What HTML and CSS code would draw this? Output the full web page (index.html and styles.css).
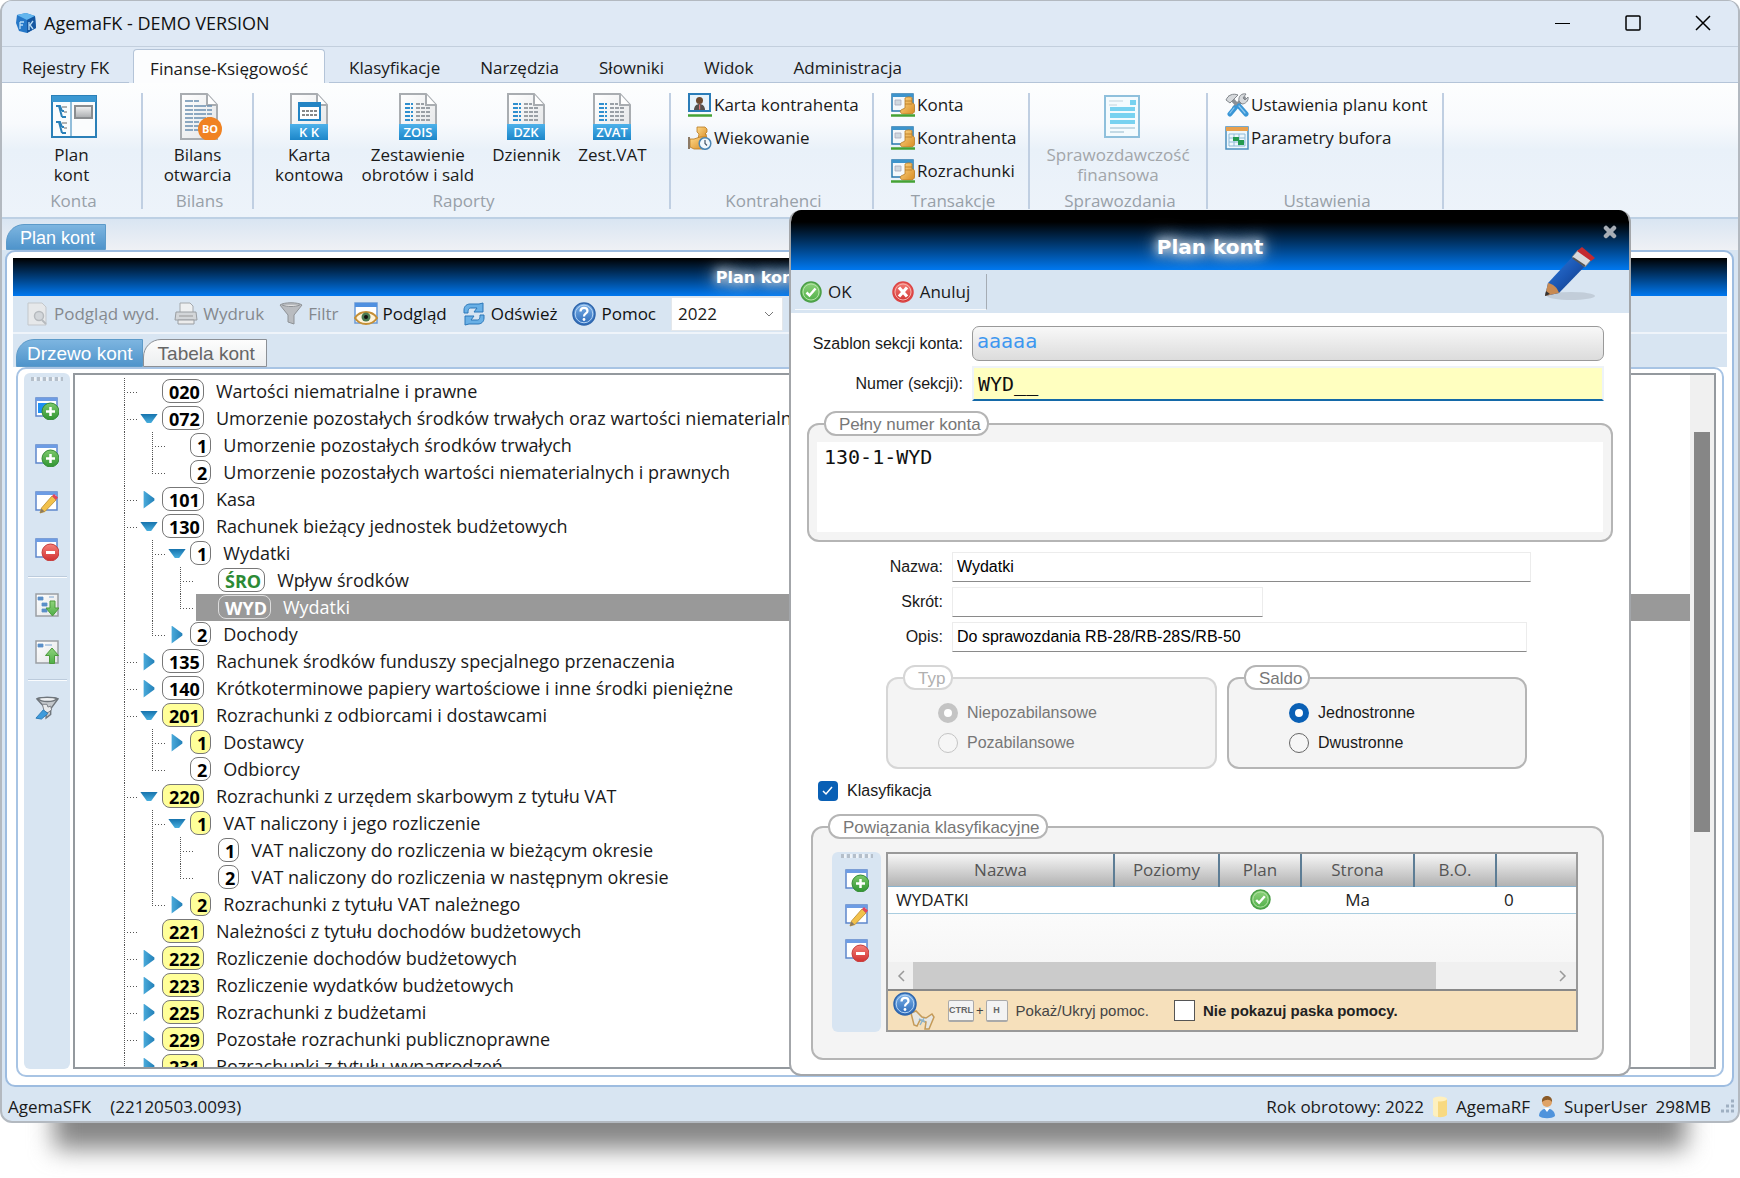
FILE: index.html
```html
<!DOCTYPE html>
<html lang="pl">
<head>
<meta charset="utf-8">
<title>AgemaFK - DEMO VERSION</title>
<link rel="stylesheet" href="styles.css">
</head>
<body>
<svg class="defs" aria-hidden="true">
  <defs>
    <linearGradient id="gBlue" x1="0" y1="0" x2="0" y2="1"><stop offset="0" stop-color="#4db1ea"/><stop offset="1" stop-color="#1c86c9"/></linearGradient>
    <linearGradient id="gGreen" x1="0" y1="0" x2="0" y2="1"><stop offset="0" stop-color="#7cc96a"/><stop offset="1" stop-color="#2f9432"/></linearGradient>
    <linearGradient id="gLime" x1="0" y1="0" x2="0" y2="1"><stop offset="0" stop-color="#8fd47c"/><stop offset="1" stop-color="#4fae48"/></linearGradient>
    <linearGradient id="gRed" x1="0" y1="0" x2="0" y2="1"><stop offset="0" stop-color="#f58078"/><stop offset="1" stop-color="#d03030"/></linearGradient>
    <linearGradient id="gPage" x1="0" y1="0" x2="1" y2="1"><stop offset="0" stop-color="#fff"/><stop offset="1" stop-color="#e2e4e6"/></linearGradient>
    <linearGradient id="gPanel" x1="0" y1="0" x2="0" y2="1"><stop offset="0" stop-color="#f4f4f4"/><stop offset="1" stop-color="#a8abae"/></linearGradient>
    <linearGradient id="gGold" x1="0" y1="0" x2="1" y2="1"><stop offset="0" stop-color="#ffd98a"/><stop offset="1" stop-color="#d98d24"/></linearGradient>
    <linearGradient id="gHelp" x1="0" y1="0" x2="0" y2="1"><stop offset="0" stop-color="#7fb4ea"/><stop offset="1" stop-color="#2a68b8"/></linearGradient>
    <linearGradient id="gPen" x1="0" y1="0" x2="1" y2="1"><stop offset="0" stop-color="#2f7fe0"/><stop offset=".5" stop-color="#1b57b4"/><stop offset="1" stop-color="#0d2f6c"/></linearGradient>
    <symbol id="doc" viewBox="0 0 38 47">
      <path d="M1 1h26l10 11v34H1z" fill="url(#gPage)" stroke="#a9adb1" stroke-width="2"/>
      <path d="M27 1v11h10" fill="#fff" stroke="#a9adb1" stroke-width="2"/>
    </symbol>
    <symbol id="docrows" viewBox="0 0 38 47">
      <use href="#doc"/>
      <path d="M6 11h8M6 15h8M6 19h8M6 23h8M6 27h8" stroke="#2f8fcf" stroke-width="2" stroke-dasharray="5 1 2"/>
      <path d="M17 11h8M17 15h15M17 19h15M17 23h15M17 27h15" stroke="#9aa0a6" stroke-width="2" stroke-dasharray="4 1"/>
      <path d="M0 31h38v16H0z" fill="url(#gBlue)"/>
    </symbol>
    <symbol id="win" viewBox="0 0 24 24">
      <path d="M1 2h21v18H1z" fill="#fff" stroke="#5d87cc" stroke-width="1.5"/>
      <path d="M1 2h21v3H1z" fill="#6d9ce4"/>
    </symbol>
    <symbol id="plus" viewBox="0 0 24 24">
      <circle cx="15.500" cy="15.500" r="8.500" fill="url(#gGreen)" stroke="#338a35"/>
      <path d="M15.500 11v9M11 15.500h9" stroke="#fff" stroke-width="2.500"/>
    </symbol>
    <symbol id="i-addf" viewBox="0 0 24 24"><use href="#win"/><path d="M3 7h13v10H3z" fill="#1e90f5"/><use href="#plus"/></symbol>
    <symbol id="i-add" viewBox="0 0 24 24"><use href="#win"/><use href="#plus"/></symbol>
    <symbol id="i-edit" viewBox="0 0 24 24">
      <use href="#win"/>
      <path d="M5 23l1.500-5L17 6l4 4L10 21.500z" fill="#f2c14b" stroke="#b98a2b" stroke-width=".8"/>
      <path d="M17 6l2-2 4 3.500-2 2.500z" fill="#e4455c"/><path d="M5 23l1.500-4.500 3 3z" fill="#8a7a62"/>
    </symbol>
    <symbol id="i-del" viewBox="0 0 24 24">
      <use href="#win"/><circle cx="15.500" cy="15.500" r="8.500" fill="url(#gRed)" stroke="#c43c3c"/>
      <path d="M11 15.500h9" stroke="#fff" stroke-width="3"/>
    </symbol>
    <symbol id="i-down" viewBox="0 0 24 24">
      <path d="M1 1h22v22H1z" fill="url(#gPage)" stroke="#9a9fa4" stroke-width="1.500"/>
      <path d="M3 4h5v3H3zM7 10h5v3H7zM7 16h5v3H7zM14 4h5" fill="#5a8fc8" stroke="#5a8fc8" stroke-width=".8"/>
      <path d="M15 8h5v7h4l-6.500 8-6.500-8h4z" fill="url(#gLime)" stroke="#4d9b3c"/>
    </symbol>
    <symbol id="i-up" viewBox="0 0 24 24">
      <path d="M1 1h22v22H1z" fill="url(#gPage)" stroke="#9a9fa4" stroke-width="1.500"/>
      <path d="M3 4h5v3H3zM10 5h7" fill="#5a8fc8" stroke="#5a8fc8" stroke-width=".8"/>
      <path d="M14.500 23.500h5v-8h4L17 8l-6.500 7.500h4z" fill="url(#gLime)" stroke="#4d9b3c"/>
    </symbol>
    <symbol id="i-funnelfix" viewBox="0 0 26 26">
      <path d="M2 3c3-2 19-2 23 0l-8 11v6l-5 4v-10z" fill="#c4c8cc" stroke="#6f757b" stroke-width="1.500"/>
      <path d="M3 3c4 4 17 4 21 0-5-2-17-2-21 0z" fill="#eef0f2" stroke="#6f757b" stroke-width="1.500"/>
      <path d="M8 9h5l1 3 3-1 1 4-4 3-4-1z" fill="#e8eaec" stroke="#777c82"/><path d="M9 15l5 4-7 6-6-1z" fill="#3d9bdc" stroke="#2a78b4"/>
    </symbol>
    <symbol id="i-ok" viewBox="0 0 22 22">
      <circle cx="11" cy="11" r="10" fill="url(#gLime)" stroke="#4a9e46" stroke-width="1.500"/>
      <circle cx="11" cy="11" r="8" fill="none" stroke="#b4e2a8"/>
      <path d="M6.500 11.500l3 3 6-7" fill="none" stroke="#fff" stroke-width="2.500"/>
    </symbol>
    <symbol id="i-no" viewBox="0 0 22 22">
      <circle cx="11" cy="11" r="10" fill="url(#gRed)" stroke="#d44" stroke-width="1.500"/>
      <circle cx="11" cy="11" r="8" fill="none" stroke="#f7b0aa"/>
      <path d="M7 6.500l8 9M15 6.500l-8 9" fill="none" stroke="#fff" stroke-width="3.200"/>
    </symbol>
    <symbol id="i-trans" viewBox="0 0 24 24">
      <path d="M1 1h21v17H1z" fill="#f4f8fb" stroke="#2878ae" stroke-width="1.500"/><path d="M1 1h21v3H1z" fill="#3d94cc"/>
      <path d="M4 7h6v5H4z" fill="#cfd8df" stroke="#aab" stroke-width=".8"/>
      <path d="M14 5c2-1.500 6-1.500 7 0v5c2 0 2.500 1 2.500 3v5c0 2-2 3-4 3h-7c-3 0-4-3-2.500-4l4-2z" fill="url(#gGold)" stroke="#b77a22" stroke-width=".8"/>
      <path d="M14 8h7M14 11h7" stroke="#b77a22" stroke-width=".8"/>
      <path d="M0 22.500h24" stroke="#45a234" stroke-width="2.600"/>
    </symbol>
    <symbol id="i-person" viewBox="0 0 24 24">
      <path d="M1 1h21v17H1z" fill="#e6f2fa" stroke="#2a7cb8" stroke-width="2"/>
      <circle cx="11.500" cy="7.500" r="3.500" fill="#6d4a30"/><path d="M6 17c0-8 11-8 11 0z" fill="#55504c"/><path d="M11 11.500h1.200v5H11z" fill="#d77"/>
      <path d="M0 22.500h24" stroke="#45a234" stroke-width="2.600"/>
    </symbol>
    <symbol id="i-aging" viewBox="0 0 24 24">
      <path d="M9 1h8l2 2v3l-2 2h1l1 5h-9l1-5-2-2V3z" fill="url(#gGold)" stroke="#b77a22" stroke-width=".8"/>
      <path d="M2 13h4l6-2h6v8l-3 4H6l-4-2z" fill="url(#gGold)" stroke="#b77a22" stroke-width=".8"/>
      <path d="M1 11v12" stroke="#8c7a66" stroke-width="2"/><circle cx="17" cy="17.500" r="5.800" fill="#f2f8fc" stroke="#4b86b4" stroke-width="1.500"/><path d="M17 14v3.500l2 2" fill="none" stroke="#456" stroke-width="1.200"/>
    </symbol>
    <symbol id="i-tools" viewBox="0 0 24 24">
      <path d="M5 4l9 10M19 5L9 15" stroke="#8b9096" stroke-width="4" stroke-linecap="round"/>
      <path d="M1 7c2-5 7-7 12-5l-3 3-5 5zM14 8c-1-5 3-8 7-7l-3 4 2 2 3-3c1 4-3 7-6 7z" fill="#d6d9dc" stroke="#83888d"/>
      <path d="M14 13l7 8M10 15l-5 6" stroke="#3a96d6" stroke-width="5" stroke-linecap="round"/>
      <path d="M14 13l6 7M9 15l-4 5" stroke="#8cc8f0" stroke-width="1.200" stroke-linecap="round"/>
    </symbol>
    <symbol id="i-buf" viewBox="0 0 24 24">
      <path d="M1 1h22v22H1z" fill="#eef7fc" stroke="#4b8fbe" stroke-width="1.500"/><path d="M1 1h22v4H1z" fill="#e9a04d"/>
      <path d="M4 8h16M4 12h16M4 16h16M4 20h16M4 8v12M9 8v12M14 8v12M20 8v12" stroke="#8ebbd8" fill="none"/><path d="M8 11h6v3h5v5h-6v-4H8z" fill="#249a50"/>
    </symbol>
    <symbol id="i-help" viewBox="0 0 24 24">
      <circle cx="12" cy="12" r="11" fill="url(#gHelp)" stroke="#2f66ad" stroke-width="1.500"/><circle cx="12" cy="12" r="8.800" fill="none" stroke="#b5d4f4"/>
      <path d="M8.500 9.500c0-5 7-4.500 7-.5 0 2.500-3.500 2.500-3.500 5.500" fill="none" stroke="#fff" stroke-width="2.200"/><circle cx="12" cy="17.500" r="1.400" fill="#fff"/>
    </symbol>
  </defs>
</svg>

<div class="window">
  <header class="titlebar">
    <svg class="logo" viewBox="0 0 22 22"><path d="M2 3l9-2 9 3 1 12-9 5-8-2-3-8z" fill="#2678c8"/><path d="M2 3l9-2 9 3-8 4z" fill="#63b6ee"/><path d="M12 8l8-4 1 12-9 5z" fill="#1556a0"/><path d="M5 10v7M5 10h4M5 13h3M14 10v8M18 9l-3 4 3 4" stroke="#b8dcf6" stroke-width="1.300" fill="none"/></svg>
    <h1 class="apptitle">AgemaFK - DEMO VERSION</h1>
    <div class="winbtns">
      <button type="button" aria-label="Minimalizuj"><svg width="16" height="16"><path d="M0 8.500h15" stroke="#000"/></svg></button>
      <button type="button" aria-label="Maksymalizuj"><svg width="16" height="16"><rect x="1" y="1" width="14" height="14" rx="1" fill="none" stroke="#000" stroke-width="1.500"/></svg></button>
      <button type="button" aria-label="Zamknij"><svg width="16" height="16"><path d="M1 1l14 14M15 1L1 15" stroke="#000" stroke-width="1.500"/></svg></button>
    </div>
  </header>

  <nav class="menutabs">
    <button type="button">Rejestry FK</button>
    <button type="button" class="active">Finanse-Księgowość</button>
    <button type="button">Klasyfikacje</button>
    <button type="button">Narzędzia</button>
    <button type="button">Słowniki</button>
    <button type="button">Widok</button>
    <button type="button">Administracja</button>
  </nav>

  <section class="ribbon">
    <div class="group g-konta">
      <div class="items center">
        <button type="button" class="big"><svg width="50" height="47" viewBox="-4 0 50 47"><path d="M1 3h44v41H1z" fill="#fafcfd" stroke="#2b80b8" stroke-width="2"/><path d="M1 3h44v6H1z" fill="#3b98d2"/><path d="M20 9v35" stroke="#2b80b8"/><path d="M5 13h4l2 5M8 13l3 11M5 29h4l2 5M8 29l3 11M11 18h2M11 24h4M11 34h2M11 40h4" stroke="#2b80b8" stroke-width="2" fill="none"/><path d="M11 14h5M13 19h3M11 30h5M13 35h3" stroke="#999" stroke-width="1.500"/><path d="M24 13h17v12H24z" fill="url(#gPanel)" stroke="#8a8d90" stroke-width="2"/></svg><span>Plan<br>kont</span></button>
      </div>
      <div class="glabel">Konta</div>
    </div>
    <div class="group g-bilans">
      <div class="items center">
        <button type="button" class="big"><svg width="50" height="47" viewBox="0 0 50 47"><use href="#doc" x="8" width="38" height="47"/><path d="M13 8h14M13 13h27M13 17h27M13 21h27M13 25h27M13 29h14M13 33h14M13 37h14" stroke="#6a8fb0" stroke-width="1.500" stroke-dasharray="8 1 12 1"/><circle cx="38" cy="36" r="12" fill="#f08222"/><text x="38" y="40" class="bo">BO</text></svg><span>Bilans<br>otwarcia</span></button>
      </div>
      <div class="glabel">Bilans</div>
    </div>
    <div class="group g-raporty">
      <div class="items">
        <button type="button" class="big"><svg width="38" height="47"><use href="#doc" width="38" height="47"/><path d="M9 10h21v17H9z" fill="#fff" stroke="#2384c4" stroke-width="2"/><path d="M9 10h21v4H9z" fill="#2384c4"/><path d="M12 18h15M12 22h15" stroke="#888" stroke-width="2" stroke-dasharray="3 1"/><path d="M0 31h38v16H0z" fill="url(#gBlue)"/><text x="19" y="44" class="doctag">K K</text></svg><span>Karta<br>kontowa</span></button>
        <button type="button" class="big"><svg width="38" height="47"><use href="#docrows" width="38" height="47"/><text x="19" y="44" class="doctag">ZOIS</text></svg><span>Zestawienie<br>obrotów i sald</span></button>
        <button type="button" class="big"><svg width="38" height="47"><use href="#docrows" width="38" height="47"/><text x="19" y="44" class="doctag">DZK</text></svg><span>Dziennik</span></button>
        <button type="button" class="big"><svg width="38" height="47"><use href="#docrows" width="38" height="47"/><text x="19" y="44" class="doctag">ZVAT</text></svg><span>Zest.VAT</span></button>
      </div>
      <div class="glabel">Raporty</div>
    </div>
    <div class="group g-kontrahenci">
      <div class="items stack">
        <button type="button" class="small"><svg><use href="#i-person"/></svg>Karta kontrahenta</button>
        <button type="button" class="small"><svg><use href="#i-aging"/></svg>Wiekowanie</button>
      </div>
      <div class="glabel">Kontrahenci</div>
    </div>
    <div class="group g-transakcje">
      <div class="items stack">
        <button type="button" class="small"><svg><use href="#i-trans"/></svg>Konta</button>
        <button type="button" class="small"><svg><use href="#i-trans"/></svg>Kontrahenta</button>
        <button type="button" class="small"><svg><use href="#i-trans"/></svg>Rozrachunki</button>
      </div>
      <div class="glabel">Transakcje</div>
    </div>
    <div class="group g-spraw">
      <div class="items center">
        <button type="button" class="big" disabled><svg width="46" height="47" viewBox="-8 0 46 47"><path d="M2 3h34v41H2z" fill="#f4fbfe" stroke="#8fc0dc" stroke-width="2"/><path d="M6 8h14M6 12h8" stroke="#c4d4dd"/><path d="M27 7h6v5h-6zM7 14h25v4H7zM7 20h25v5H7zM7 27h25v4H7z" fill="#78d2f0"/><path d="M7 35h25M7 39h14" stroke="#b4cfdd" stroke-width="1.500"/></svg><span>Sprawozdawczość<br>finansowa</span></button>
      </div>
      <div class="glabel">Sprawozdania</div>
    </div>
    <div class="group g-ustaw">
      <div class="items stack">
        <button type="button" class="small"><svg><use href="#i-tools"/></svg>Ustawienia planu kont</button>
        <button type="button" class="small"><svg><use href="#i-buf"/></svg>Parametry bufora</button>
      </div>
      <div class="glabel">Ustawienia</div>
    </div>
  </section>

  <div class="doctabs"><button type="button" class="ctab active">Plan kont</button></div>

  <main class="panel">
    <div class="banner"><h2 class="glow">Plan kont</h2></div>
    <div class="toolbar">
      <button type="button" disabled><svg viewBox="0 0 24 24"><path d="M3 1h14l4 4v18H3z" fill="#e6e8ea" stroke="#c3c7cb"/><circle cx="14" cy="14" r="4.500" fill="#d2d6da" stroke="#b6babe" stroke-width="1.500"/><path d="M17 18l4 4" stroke="#b6babe" stroke-width="2"/></svg>Podgląd wyd.</button>
      <button type="button" disabled><svg viewBox="0 0 24 24"><path d="M6 1h10l3 3v7H6z" fill="#eef0f1" stroke="#a4a8ac"/><path d="M2 10h20l1 8H1z" fill="#d3d6d9" stroke="#9a9ea2"/><path d="M4 18h16v4H4z" fill="#ececec" stroke="#9a9ea2"/><path d="M5 14h14" stroke="#999"/></svg>Wydruk</button>
      <button type="button" disabled><svg viewBox="0 0 24 24"><path d="M1 3c4-3 18-3 22 0l-8 10v9l-6-2v-7z" fill="#b9bcc0" stroke="#8e9296"/><path d="M3 3c5 2 13 2 18 0" fill="#e4e4e4" stroke="#8e9296"/></svg>Filtr</button>
      <button type="button"><svg viewBox="0 0 24 24"><path d="M1 1h22v20H1z" fill="#fff" stroke="#6b9bd6" stroke-width="1.500"/><path d="M1 1h22v4H1z" fill="#4f90e0"/><path d="M1 16c5-8 17-8 22 0-5 8-17 8-22 0z" fill="#fff4da" stroke="#c58f35" stroke-width="2"/><circle cx="12" cy="15" r="4.500" fill="#4a7a52"/><circle cx="12" cy="15" r="2" fill="#111"/></svg>Podgląd</button>
      <button type="button"><svg viewBox="0 0 24 24"><path d="M2 11V8c0-4 3-6 6-6h9l4-1v9h-9l3-4H9C7 6 6 7 6 11zM22 13v3c0 4-3 6-6 6H7l-4 1v-9h9l-3 4h6c2 0 3-1 3-5z" fill="#69b0e6" stroke="#2c77b8"/></svg>Odśwież</button>
      <button type="button"><svg><use href="#i-help"/></svg>Pomoc</button>
      <select class="year" aria-label="Rok"><option>2022</option></select>
    </div>
    <div class="innertabs"><button type="button" class="ctab active">Drzewo kont</button><button type="button" class="ctab">Tabela kont</button></div>
    <div class="inner">
      <div class="sidebar">
        <span class="grip"></span>
        <button type="button" aria-label="Dodaj konto"><svg><use href="#i-addf"/></svg></button>
        <button type="button" aria-label="Dodaj"><svg><use href="#i-add"/></svg></button>
        <button type="button" aria-label="Edytuj"><svg><use href="#i-edit"/></svg></button>
        <button type="button" aria-label="Usuń"><svg><use href="#i-del"/></svg></button>
        <hr>
        <button type="button" aria-label="Rozwiń"><svg><use href="#i-down"/></svg></button>
        <button type="button" aria-label="Zwiń"><svg><use href="#i-up"/></svg></button>
        <hr>
        <button type="button" aria-label="Filtruj"><svg><use href="#i-funnelfix"/></svg></button>
      </div>
      <div class="tree">
        <ul class="rows">
          <li><i class="t"></i><div class="node"><i class="a"></i><b>020</b>Wartości niematrialne i prawne</div></li>
          <li><i class="t"></i><div class="node"><i class="a open"></i><b>072</b>Umorzenie pozostałych środków trwałych oraz wartości niematerialnych</div></li>
          <li><i class="v"></i><i class="t"></i><div class="node"><i class="a"></i><b>1</b>Umorzenie pozostałych środków trwałych</div></li>
          <li><i class="v"></i><i class="t l"></i><div class="node"><i class="a"></i><b>2</b>Umorzenie pozostałych wartości niematerialnych i prawnych</div></li>
          <li><i class="t"></i><div class="node"><i class="a shut"></i><b>101</b>Kasa</div></li>
          <li><i class="t"></i><div class="node"><i class="a open"></i><b>130</b>Rachunek bieżący jednostek budżetowych</div></li>
          <li><i class="v"></i><i class="t"></i><div class="node"><i class="a open"></i><b>1</b>Wydatki</div></li>
          <li><i class="v"></i><i class="v"></i><i class="t"></i><div class="node"><i class="a"></i><b class="green">ŚRO</b>Wpływ środków</div></li>
          <li><i class="v"></i><i class="v"></i><i class="t l"></i><div class="node sel"><i class="a"></i><b>WYD</b>Wydatki</div></li>
          <li><i class="v"></i><i class="t l"></i><div class="node"><i class="a shut"></i><b>2</b>Dochody</div></li>
          <li><i class="t"></i><div class="node"><i class="a shut"></i><b>135</b>Rachunek środków funduszy specjalnego przenaczenia</div></li>
          <li><i class="t"></i><div class="node"><i class="a shut"></i><b>140</b>Krótkoterminowe papiery wartościowe i inne środki pieniężne</div></li>
          <li><i class="t"></i><div class="node"><i class="a open"></i><b class="y">201</b>Rozrachunki z odbiorcami i dostawcami</div></li>
          <li><i class="v"></i><i class="t"></i><div class="node"><i class="a shut"></i><b class="y">1</b>Dostawcy</div></li>
          <li><i class="v"></i><i class="t l"></i><div class="node"><i class="a"></i><b>2</b>Odbiorcy</div></li>
          <li><i class="t"></i><div class="node"><i class="a open"></i><b class="y">220</b>Rozrachunki z urzędem skarbowym z tytułu VAT</div></li>
          <li><i class="v"></i><i class="t"></i><div class="node"><i class="a open"></i><b class="y">1</b>VAT naliczony i jego rozliczenie</div></li>
          <li><i class="v"></i><i class="v"></i><i class="t"></i><div class="node"><i class="a"></i><b>1</b>VAT naliczony do rozliczenia w bieżącym okresie</div></li>
          <li><i class="v"></i><i class="v"></i><i class="t l"></i><div class="node"><i class="a"></i><b>2</b>VAT naliczony do rozliczenia w następnym okresie</div></li>
          <li><i class="v"></i><i class="t l"></i><div class="node"><i class="a shut"></i><b class="y">2</b>Rozrachunki z tytułu VAT należnego</div></li>
          <li><i class="t"></i><div class="node"><i class="a"></i><b class="y">221</b>Należności z tytułu dochodów budżetowych</div></li>
          <li><i class="t"></i><div class="node"><i class="a shut"></i><b class="y">222</b>Rozliczenie dochodów budżetowych</div></li>
          <li><i class="t"></i><div class="node"><i class="a shut"></i><b class="y">223</b>Rozliczenie wydatków budżetowych</div></li>
          <li><i class="t"></i><div class="node"><i class="a shut"></i><b class="y">225</b>Rozrachunki z budżetami</div></li>
          <li><i class="t"></i><div class="node"><i class="a shut"></i><b class="y">229</b>Pozostałe rozrachunki publicznoprawne</div></li>
          <li><i class="t"></i><div class="node"><i class="a shut"></i><b class="y">231</b>Rozrachunki z tytułu wynagrodzeń</div></li>
        </ul>
        <div class="vscroll"><span></span></div>
      </div>
    </div>
  </main>

  <footer class="status">
    <span>AgemaSFK</span><span class="ver">(22120503.0093)</span>
    <span class="right">Rok obrotowy: 2022</span>
    <svg width="16" height="22"><path d="M1 3h14v16c-3 3-11 3-14 0z" fill="#f8d981"/><path d="M1 3h5v18c-3 0-4-1-5-2z" fill="#fdf0c0"/><ellipse cx="8" cy="3" rx="7" ry="2.500" fill="#fff0bd"/></svg>
    <span>AgemaRF</span>
    <svg width="18" height="24"><path d="M1 21c0-10 16-10 16 0-3 3-13 3-16 0z" fill="#4f93dc"/><path d="M6 13l3 4 3-4z" fill="#fff"/><circle cx="9" cy="7" r="5" fill="#dfa368"/><path d="M4 7c-1-8 11-8 10 0-2-3-6-3-10 0z" fill="#8a5a28"/></svg>
    <span>SuperUser</span><span class="mem">298MB</span>
    <svg width="16" height="16"><path d="M12 2h3M7 7h3M12 7h3M2 12h3M7 12h3M12 12h3" stroke="#9fb0c2" stroke-width="3"/></svg>
  </footer>

  <form class="dialog">
    <div class="dhead">
      <h2 class="glow">Plan kont</h2>
      <button type="button" class="dclose" aria-label="Zamknij"><svg width="14" height="14"><path d="M3 3l8 8M11 3l-8 8" stroke="#a7adb5" stroke-width="4.500" stroke-linecap="round"/></svg></button>
    </div>
    <svg class="pencil" viewBox="0 0 54 56"><ellipse cx="28" cy="50" rx="24" ry="4" fill="#000" opacity=".1"/><path d="M2 50l3-13L33 7l13 9-30 31z" fill="url(#gPen)"/><path d="M2 50l3-13c5 1 9 4 11 10z" fill="#c88a52"/><path d="M2 50l1-5 4 3z" fill="#333"/><path d="M29 11l6-7 14 9-7 8z" fill="#d8dadd" stroke="#777" stroke-width=".8"/><path d="M34 5l5-4 13 11-4 3z" fill="#c42a30"/><path d="M30 12l12 8" stroke="#555" stroke-width="2"/></svg>
    <div class="dtool">
      <div class="dbtns">
        <button type="submit"><svg><use href="#i-ok"/></svg>OK</button>
        <button type="button"><svg><use href="#i-no"/></svg>Anuluj</button>
      </div>
    </div>
    <div class="dbody">
      <div class="field top"><label for="tpl">Szablon sekcji konta:</label><button type="button" id="tpl" class="tpl">aaaaa</button></div>
      <div class="field top"><label for="num">Numer (sekcji):</label><input id="num" class="num" value="WYD__"></div>
      <fieldset class="full"><legend>Pełny numer konta</legend><textarea aria-label="Pełny numer konta">130-1-WYD</textarea></fieldset>
      <div class="mid">
        <div class="field"><label for="naz">Nazwa:</label><input id="naz" class="line wide" value="Wydatki"></div>
        <div class="field"><label for="skr">Skrót:</label><input id="skr" class="line short" value=""></div>
        <div class="field"><label for="opi">Opis:</label><input id="opi" class="line" value="Do sprawozdania RB-28/RB-28S/RB-50"></div>
      </div>
      <div class="radios">
        <fieldset class="typ" disabled><legend>Typ</legend>
          <label><input type="radio" name="typ" checked>Niepozabilansowe</label>
          <label><input type="radio" name="typ">Pozabilansowe</label>
        </fieldset>
        <fieldset class="saldo"><legend>Saldo</legend>
          <label><input type="radio" name="saldo" checked>Jednostronne</label>
          <label><input type="radio" name="saldo">Dwustronne</label>
        </fieldset>
      </div>
      <label class="klas"><input type="checkbox" class="tick" checked>Klasyfikacja</label>
      <fieldset class="links"><legend>Powiązania klasyfikacyjne</legend>
        <div class="lrow">
          <div class="sidebar mini">
            <span class="grip"></span>
            <button type="button" aria-label="Dodaj powiązanie"><svg><use href="#i-add"/></svg></button>
            <button type="button" aria-label="Edytuj powiązanie"><svg><use href="#i-edit"/></svg></button>
            <button type="button" aria-label="Usuń powiązanie"><svg><use href="#i-del"/></svg></button>
          </div>
          <div class="gridbox">
            <table>
              <colgroup><col class="c1"><col class="c2"><col class="c3"><col class="c4"><col class="c5"><col></colgroup>
              <thead><tr><th>Nazwa</th><th>Poziomy</th><th>Plan</th><th>Strona</th><th>B.O.</th><th></th></tr></thead>
              <tbody><tr><td>WYDATKI</td><td></td><td class="mid-c"><svg><use href="#i-ok"/></svg></td><td class="mid-c">Ma</td><td></td><td>0</td></tr></tbody>
            </table>
            <div class="hscroll"><svg width="8" height="12"><path d="M7 1L2 6l5 5" fill="none" stroke="#999" stroke-width="1.500"/></svg><span class="track"><span></span></span><svg width="8" height="12"><path d="M1 1l5 5-5 5" fill="none" stroke="#999" stroke-width="1.500"/></svg></div>
            <div class="helpbar">
              <svg class="hicon" viewBox="0 0 42 38"><path d="M18 21l5-2 6 6 4 1 6-4 2 3-5 12h-4l1-7-6-2-3 6-3-1z" fill="#e6e6e2" stroke="#c49a58" stroke-width="1.500"/><path d="M26 27l6 3M31 26l-4 7" stroke="#8cb4cc" stroke-width="1.500"/><use href="#i-help" width="24" height="24"/></svg>
              <kbd>CTRL</kbd><span class="pl">+</span><kbd class="h">H</kbd>
              <span class="htext">Pokaż/Ukryj pomoc.</span>
              <label class="nohelp"><input type="checkbox">Nie pokazuj paska pomocy.</label>
            </div>
          </div>
        </div>
      </fieldset>
    </div>
  </form>
</div>
<div class="castshadow"></div>
</body>
</html>
```
FILE: styles.css
```css
* { box-sizing: border-box; }
body {
  display: flow-root;
  min-height: 100vh;
  margin: 0;
  background: #fff;
  color: #1a1a1a;
  font: 17px/20px "Open Sans", "Noto Sans", sans-serif;
}
button, input, select, textarea { font: inherit; color: inherit; margin: 0; }
button { border: 0; background: none; padding: 0; }
h1, h2 { margin: 0; }
.defs { position: absolute; width: 0; height: 0; }

.window {
  position: relative;
  z-index: 1;
  display: flex;
  flex-direction: column;
  height: calc(100vh - 55px);
  min-height: 900px;
  border: 2px solid #b3b9c0;
  border-top-width: 1px;
  border-radius: 12px;
  background: #d8e5f2;
  overflow: hidden;
}
.castshadow {
  height: 58px;
  margin: -32px 54px 0;
  background: #858585;
  filter: blur(12px);
}

.titlebar {
  display: flex;
  align-items: center;
  height: 46px;
  padding: 0 13px 2px;
  background: #dfe9f5;
  border-bottom: 1px solid #c3cfdd;
}
.logo { width: 22px; height: 22px; margin-right: 7px; }
.apptitle { font-size: 18px; font-weight: 400; color: #111; }
.winbtns { display: flex; gap: 54px; margin-left: auto; padding-right: 14px; }
.winbtns button { display: block; height: 16px; }
.winbtns svg { display: block; }

.menutabs {
  display: flex;
  align-items: flex-end;
  height: 36px;
  background: #dfe9f5;
}
.menutabs button {
  height: 34px;
  padding: 4px 20px 0;
  border-bottom: 1px solid #b4c4d8;
}
.menutabs::after { content: ""; flex: 1; border-bottom: 1px solid #b4c4d8; }
.menutabs .active {
  padding: 4px 16px 0;
  margin: 0 4px;
  background: #fcfdfe;
  border: 1px solid #b4c4d8;
  border-bottom: 0;
  border-radius: 4px 4px 0 0;
}

.ribbon {
  display: flex;
  height: 136px;
  padding: 8px 0 8px;
  background: linear-gradient(#fdfefe, #f8fafd 30%, #e9f1f9 50%, #edf3fa);
  border-bottom: 2px solid #bdd0e4;
}
.group {
  display: flex;
  flex-direction: column;
  border-right: 2px solid #c0cfe2;
  margin-top: 2px;
}
.g-konta { width: 141px; }
.g-bilans { width: 111px; }
.g-raporty { width: 417px; }
.g-kontrahenci { width: 203px; }
.g-transakcje { width: 156px; }
.g-spraw { width: 178px; }
.g-ustaw { width: 236px; }
.items { display: flex; flex: 1; padding-left: 12px; }
.items.center { justify-content: center; padding: 0; }
.items.stack { flex-direction: column; gap: 9px; padding-left: 17px; }
.glabel { text-align: center; color: #98a0a8; height: 16px; line-height: 16px; padding-left: 4px; }
.big { display: flex; flex-direction: column; align-items: center; gap: 5px; padding: 0 9px; }
.g-bilans .big, .g-konta .big, .g-spraw .big { padding: 0; }
.big:disabled { color: #a2a6aa; }
.small { display: flex; align-items: center; gap: 2px; height: 24px; white-space: nowrap; }
.small svg { width: 24px; height: 24px; }
.doctag { font: 600 13px "Open Sans", sans-serif; fill: #fff; text-anchor: middle; }
.bo { font: 700 11px "Open Sans", sans-serif; fill: #fff; text-anchor: middle; }

.doctabs {
  display: flex;
  align-items: flex-end;
  height: 31px;
  padding-left: 4px;
  background: linear-gradient(#d9e5f2, #eff1f5);
}
.ctab {
  height: 26px;
  padding: 2px 10px 0 13px;
  font: 18px/22px "Liberation Sans", Arial, sans-serif;
  border: 1px solid #8c9096;
  border-radius: 18px 0 0 0;
  background: linear-gradient(#fdfdfd, #eceef0);
  color: #666;
}
.ctab.active { background: linear-gradient(#7db5e0, #4f94cb); border-color: #5c9ac9; color: #fff; }

.panel {
  flex: 1;
  display: flex;
  flex-direction: column;
  min-height: 0;
  margin: 0 4px 0 3px;
  padding: 6px 5px 8px 6px;
  border: 2px solid #9dbce0;
  border-radius: 10px;
  background: #fff;
}
.banner {
  display: flex;
  align-items: center;
  height: 38px;
  padding-left: 41%;
  background: linear-gradient(#000, #0078f0);
}
.glow {
  font: 700 16px "DejaVu Sans", sans-serif;
  color: #fff;
  text-shadow: 0 0 10px rgba(255,255,255,.8), 0 0 16px rgba(255,255,255,.8), 0 0 20px rgba(255,255,255,.8);
}
.toolbar {
  display: flex;
  align-items: center;
  height: 38px;
  padding-left: 12px;
  gap: 15px;
  background: #d8e5f2;
  border-bottom: 2px solid #eff4fa;
}
.toolbar button { display: flex; align-items: center; gap: 5px; color: #111; }
.toolbar button:disabled { color: #85898e; }
.toolbar svg { width: 24px; height: 24px; }
.year {
  width: 112px;
  height: 34px;
  padding: 2px 6px;
  border: 1px solid #e3e7eb;
  border-radius: 0;
  appearance: none;
  background: #fff;
  background-image: url("data:image/svg+xml,%3Csvg xmlns='http://www.w3.org/2000/svg' width='10' height='6'%3E%3Cpath d='M1 1l4 4 4-4' fill='none' stroke='%23777'/%3E%3C/svg%3E");
  background-repeat: no-repeat;
  background-position: right 8px center;
}
.innertabs {
  display: flex;
  align-items: flex-end;
  height: 33px;
  padding-left: 3px;
  background: #d8e5f2;
}
.innertabs .ctab { height: 28px; font-size: 19px; padding: 1px 9px 0 10px; }
.innertabs .ctab + .ctab { padding: 1px 11px 0 14px; }
.inner {
  flex: 1;
  display: flex;
  min-height: 0;
  gap: 3px;
  margin-left: 3px;
  margin-right: 3px;
  padding: 4px 6px 6px;
  border: 2px solid #a8c4e4;
  border-radius: 10px;
}
.sidebar {
  display: flex;
  flex-direction: column;
  align-items: center;
  gap: 23px;
  width: 46px;
  padding-top: 4px;
  background: #d8e5f2;
  border-radius: 6px;
}
.sidebar button, .sidebar svg { display: block; width: 24px; height: 24px; }
.sidebar hr { width: 39px; height: 2px; margin: -8px 0; border: 0; background: #fafcfe; border-top: 1px solid #bccbdc; }
.grip { width: 32px; height: 4px; margin-bottom: -8px; background: repeating-linear-gradient(90deg, #b5bfca 0 3px, #eef3f8 3px 5px, transparent 5px 6px); }

.tree {
  flex: 1;
  display: flex;
  min-width: 0;
  border: 2px solid #94999e;
  background: #fff;
}
.rows {
  flex: 1;
  min-width: 0;
  margin: 0;
  padding: 3px 0 0 49px;
  overflow: hidden;
  list-style: none;
  font-size: 18px;
}
.rows li { display: flex; height: 27px; }
.rows i { flex: none; }
.rows .v, .rows .t {
  width: 28px;
  background: repeating-linear-gradient(#555 0 1px, transparent 1px 2px) 0 0 / 1px 100% no-repeat;
}
.rows .t {
  width: 16px;
  background:
    repeating-linear-gradient(#555 0 1px, transparent 1px 2px) 0 0 / 1px 100% no-repeat,
    repeating-linear-gradient(90deg, #555 0 1px, transparent 1px 3px) 0 14px / 13px 1px no-repeat;
}
.rows .l {
  background:
    repeating-linear-gradient(#555 0 1px, transparent 1px 2px) 0 0 / 1px 14px no-repeat,
    repeating-linear-gradient(90deg, #555 0 1px, transparent 1px 3px) 0 14px / 13px 1px no-repeat;
}
.node { flex: 1; min-width: 0; display: flex; align-items: center; white-space: nowrap; line-height: 27px; }
.node.sel { background: #999; color: #fff; }
.rows .a { width: 18px; height: 18px; margin-right: 4px; }
.rows .open { height: 10px; background: linear-gradient(#1673ad, #4fb6e4); clip-path: polygon(0 0, 100% 0, 62% 95%, 38% 95%); }
.rows .shut { background: linear-gradient(90deg, #57b8e6, #1673ad); clip-path: polygon(20% 0, 80% 45%, 80% 55%, 20% 100%); }
.node b {
  height: 24px;
  margin: 0 12px 2px 0;
  padding: 0 3px 0 6px;
  border: 1px solid #777;
  border-radius: 8px;
  background: #fff;
  color: #000;
  line-height: 24px;
}
.node b.y { background: #ffff99; }
.node b.green { color: #2c8a35; }
.node.sel b { background: #999; border-color: #ddd; color: #fff; }
.vscroll { width: 24px; padding: 57px 4px 0; background: #f0f0f0; }
.vscroll span { display: block; height: 63%; background: #868686; }

.status {
  display: flex;
  align-items: center;
  height: 34px;
  padding: 6px 3px 0 6px;
  gap: 8px;
}
.status .ver { margin-left: 11px; }
.status .right { margin-left: auto; }

.dialog {
  position: absolute;
  top: 209px;
  right: 107px;
  width: 842px;
  border: 2px solid #a3a6aa;
  border-top: 0;
  border-radius: 12px;
  background: #fff;
  overflow: hidden;
  font: 16px/20px "Liberation Sans", Arial, sans-serif;
}
.dhead {
  display: flex;
  align-items: center;
  justify-content: center;
  height: 60px;
  padding-top: 14px;
  background: linear-gradient(#000 12px, #0078f0);
}
.dhead .glow { font-size: 20px; }
.dclose { position: absolute; right: 12px; top: 15px; }
.dclose svg { display: block; }
.pencil { position: absolute; right: 32px; top: 36px; width: 54px; height: 56px; }
.dtool { height: 43px; padding: 4px 0 2px 4px; background: #d8e5f2; }
.dbtns { display: flex; align-items: center; gap: 40px; width: 192px; height: 36px; padding-left: 5px; border-right: 1px solid #a5acb4; border-bottom: 1px solid #f6f9fc; font: 17px/20px "Open Sans", sans-serif; }
.dbtns button { display: flex; align-items: center; gap: 6px; }
.dbtns svg { width: 22px; height: 22px; }
.dbody { padding: 13px 16px 14px; }
.field { display: flex; align-items: center; gap: 9px; }
.field label { text-align: right; width: 66px; }
.field.top { margin-bottom: 5px; }
.field.top label { width: 156px; }
.tpl, .num { flex: 1; margin-right: 9px; height: 35px; padding: 0 4px; text-align: left; font: 20px/24px "DejaVu Sans Mono", monospace; }
.tpl { border: 1px solid #999; border-radius: 7px; background: linear-gradient(#f8f8f8, #dcdcdc); color: #3d97f0; padding-bottom: 6px; }
.num { border: 2px solid #eef3f8; border-bottom-color: #1469a8; background: #ffffc0; color: #111; outline: none; }
fieldset { margin: 0; min-width: 0; border: 2px solid #b5b5b5; border-radius: 12px; background: #f4f4f4; }
legend { height: 25px; padding: 1px 6px 0 13px; border: 2px solid #b5b5b5; border-radius: 12px; background: #fff; color: #777; line-height: 21px; font-size: 17px; }
.full { margin-top: 10px; padding: 6px 8px 8px; }
.full legend, .links legend { margin-left: 7px; }
.full textarea { display: block; width: 100%; height: 90px; padding: 2px 7px; border: 0; resize: none; background: #fff; color: #111; font: 20px/26px "DejaVu Sans Mono", monospace; }
.mid { display: flex; flex-direction: column; gap: 5px; margin: 10px 86px 0 70px; }
.mid .line { flex: 1; min-width: 0; height: 30px; padding: 0 4px; border: 1px solid #ececec; border-bottom: 1px solid #8a8a8a; background: #fff; color: #000; }
.mid .wide { margin-right: -4px; }
.mid .short { flex: none; width: 311px; }
.radios { display: grid; grid-template-columns: 331fr 300fr; gap: 10px; margin: 13px 86px 0 79px; }
.radios fieldset { height: 104px; padding: 8px 0 0 50px; }
.radios .saldo { padding-left: 60px; }
.radios legend { margin-left: -35px; }
.radios .saldo legend { margin-left: -45px; }
.radios label { display: flex; align-items: center; gap: 9px; height: 30px; }
.typ, .typ legend { border-color: #d6d6d6; }
.typ legend { color: #b0b0b0; }
.typ label { color: #777; }
input[type="radio"] { appearance: none; width: 20px; height: 20px; border: 1px solid #666; border-radius: 50%; background: #f6f6f6; }
input[type="radio"]:checked { border: 6px solid #0a60b5; background: #fff; }
.typ input[type="radio"], .typ input[type="radio"]:checked { border-color: #c4c4c4; }
.klas { display: flex; align-items: center; gap: 9px; margin: 12px 0 13px 11px; }
.tick { appearance: none; width: 20px; height: 20px; border-radius: 4px; background: #0a60b5 url("data:image/svg+xml,%3Csvg xmlns='http://www.w3.org/2000/svg' width='20' height='20'%3E%3Cpath d='M5 10l3 3 6-7' fill='none' stroke='%23fff' stroke-width='1.5'/%3E%3C/svg%3E"); }
.links { margin: 0 9px 0 4px; padding: 13px 24px 26px 19px; }
.links legend { margin-left: -4px; }
.lrow { display: flex; gap: 5px; }
.mini { width: 49px; gap: 11px; padding-top: 2px; }
.mini .grip { margin-bottom: -1px; }
.gridbox {
  flex: 1;
  min-width: 0;
  display: flex;
  flex-direction: column;
  height: 180px;
  border: 2px solid #999;
  background: linear-gradient(#fbfbfb 60px, #efefef);
}
table { width: 100%; table-layout: fixed; border-collapse: collapse; font: 17px/20px "Open Sans", sans-serif; }
.c1 { width: 226px; } .c2 { width: 105px; } .c3 { width: 82px; } .c4 { width: 113px; } .c5 { width: 82px; }
th { height: 32px; padding: 0; font-weight: 400; color: #555; background: linear-gradient(#f6f6f6, #b2b2b2); border-right: 2px solid #5d7d95; border-bottom: 1px solid #8bb4cf; }
th:last-child { border-right: 0; }
td { height: 27px; padding: 0 8px; background: #fff; border-bottom: 1px solid #a9cde0; color: #222; }
td.mid-c { text-align: center; padding: 0; }
td svg { display: block; width: 21px; height: 21px; margin: auto; }
.hscroll { display: flex; align-items: center; gap: 8px; height: 27px; margin-top: auto; padding: 0 9px; background: #f0f0f0; }
.track { flex: 1; height: 27px; }
.track span { display: block; width: 82%; height: 100%; background: #cbcbcb; }
.helpbar { display: flex; align-items: center; height: 41px; padding-left: 5px; border-top: 2px solid #888; background: #f6e0bb; color: #444; }
.hicon { width: 42px; height: 38px; margin-right: 13px; }
kbd { width: 26px; height: 22px; border: 1px solid #aaa; border-bottom-width: 2px; border-radius: 2px; background: #f3f3f3; color: #666; text-align: center; font: 700 9px/19px "Liberation Sans", sans-serif; }
kbd.h { width: 22px; }
.pl { padding: 0 2px; font-size: 13px; }
.htext { margin-left: 8px; font-size: 15px; }
.nohelp { display: flex; align-items: center; gap: 8px; margin-left: 25px; font-size: 15px; font-weight: 700; color: #222; }
.nohelp input { appearance: none; width: 21px; height: 21px; border: 1px solid #555; background: #fff; }
```
